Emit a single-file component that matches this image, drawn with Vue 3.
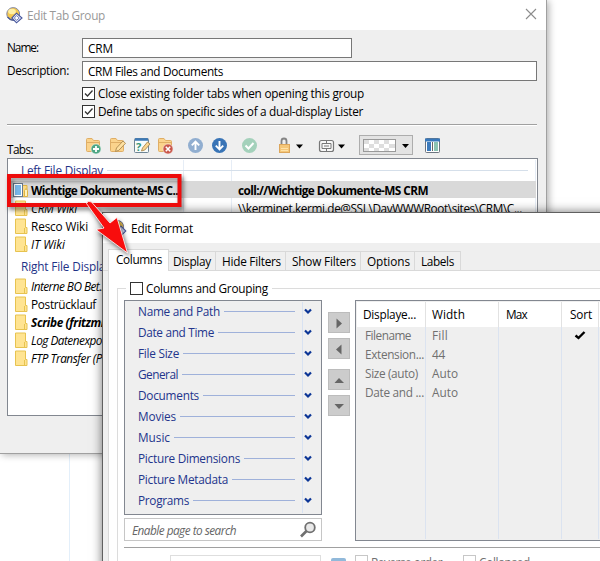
<script setup>
const space = (el, { value }) => {
  if (!value) return
  const n = el.textContent.length
  el.style.letterSpacing = (value - el.getBoundingClientRect().width) / n + 'px'
}
const vSpan = { mounted: space }

const leftTabs = [
  { name: 'CRM Wiki', w: 46, kind: 'italic', path: '\\\\kerminet.kermi.de@SSL\\DavWWWRoot\\sites\\CRM\\C...' },
  { name: 'Resco Wiki', w: 57 },
  { name: 'IT Wiki', w: 34, kind: 'italic' }
]
const rightTabs = [
  { name: 'Interne BO Bet..', w: 73, kind: 'italic' },
  { name: 'Postrücklauf', w: 65 },
  { name: 'Scribe (fritzmi', w: 73, kind: 'bold italic' },
  { name: 'Log Datenexpo', w: 71, kind: 'italic' },
  { name: 'FTP Transfer (P', w: 71, kind: 'italic' }
]
const pages = [
  { name: 'Display', w: 38, box: 47 },
  { name: 'Hide Filters', w: 59, box: 70 },
  { name: 'Show Filters', w: 64, box: 75 },
  { name: 'Options', w: 43, box: 54 },
  { name: 'Labels', w: 33, box: 46 }
]
const groups = [
  ['Name and Path', 82], ['Date and Time', 76], ['File Size', 41], ['General', 40],
  ['Documents', 61], ['Movies', 38], ['Music', 32], ['Picture Dimensions', 102],
  ['Picture Metadata', 90], ['Programs', 51]
]
const columns = [
  ['Filename', 46, 'Fill', 16, true], ['Extension...', 59, '44', 13],
  ['Size (auto)', 53, 'Auto', 26], ['Date and ...', 59, 'Auto', 26]
]
const moves = [
  { side: 'right', d: 'M7.5 5.5 L13 10.5 L7.5 15.5 Z' },
  { side: 'left', d: 'M12.5 5.5 L7 10.5 L12.5 15.5 Z' },
  { side: 'up', d: 'M5.5 13 L10 8 L15 13 Z' },
  { side: 'down', d: 'M5.5 8 L10 13 L15 8 Z' }
]
</script>

<template>
  <div class="desktop">
    <div class="guide"></div>

    <section class="win group-win">
      <header class="title dim">
        <svg class="logo" width="17" height="17" viewBox="0 0 17 17">
          <circle cx="7.2" cy="7" r="6.4" fill="#f5c84e" stroke="#8087a8" />
          <ellipse cx="6" cy="4.5" rx="3.8" ry="2.7" fill="#fff0a5" />
          <path d="M1.5 10 Q5 14 9 13" fill="none" stroke="#4c5c98" stroke-width="1.3" />
          <path d="M10.5 6.2 L16 11 L10.5 15.8 L5.8 11 Z" fill="#e7eafb" stroke="#46569c" stroke-width="1.1" />
          <path d="M10.5 8.5 L13.2 11 L10.5 13.4 L8.4 11 Z" fill="#fff" stroke="#7782b8" />
        </svg>
        <span v-span="78">Edit Tab Group</span>
        <svg class="close" width="12" height="12" viewBox="0 0 12 12"><path d="M1 1 L11 11 M11 1 L1 11" stroke="#8c8c8c" stroke-width="1.1" /></svg>
      </header>

      <div class="field name"><label><span v-span="31">Name:</span></label><div class="input"><span v-span="25">CRM</span></div></div>
      <div class="field desc"><label><span v-span="62">Description:</span></label><div class="input"><span v-span="135">CRM Files and Documents</span></div></div>
      <div class="option first"><svg class="box" width="13" height="13"><path d="M2 5.500 L4.500 8 L9.500 2.500" fill="none" stroke="#333" stroke-width="1.3" /></svg><span v-span="266">Close existing folder tabs when opening this group</span></div>
      <div class="option"><svg class="box" width="13" height="13"><path d="M2 5.500 L4.500 8 L9.500 2.500" fill="none" stroke="#333" stroke-width="1.3" /></svg><span v-span="265">Define tabs on specific sides of a dual-display Lister</span></div>
      <div class="rule"></div>

      <div class="toolbar">
        <div class="caption"><span v-span="26">Tabs:</span></div>
        <svg width="460" height="24" viewBox="80 133 460 24">
          <g fill="#fbd38c" stroke="#dfae66">
            <path d="M86.5 139.5 q0 -1 1 -1 h4.5 l1.5 2 h5 q1 0 1 1 v9 q0 1 -1 1 h-11 q-1 0 -1 -1 Z M87 142.5 h12" />
            <path d="M110.500 139.500 q0 -1 1 -1 h4.500 l1.500 2 h5 q1 0 1 1 v9 q0 1 -1 1 h-11 q-1 0 -1 -1 Z M111 142.500 h12" />
            <path d="M158.500 139.500 q0 -1 1 -1 h4.500 l1.500 2 h5 q1 0 1 1 v9 q0 1 -1 1 h-11 q-1 0 -1 -1 Z M159 142.500 h12" />
          </g>
          <circle cx="96" cy="149" r="5" fill="#4da684" stroke="#e6f2ec" stroke-width=".6" />
          <path d="M96 146 v6 M93 149 h6" stroke="#fff" stroke-width="1.8" />
          <path d="M115.500 151.500 l1 -3.500 l6.500 -7 l2.500 2.300 l-6.700 7 Z" fill="#ffe0a0" stroke="#a98850" stroke-width=".9" />
          <rect x="134.500" y="138.500" width="14" height="14" rx="1" fill="#f8fcfb" stroke="#6e8595" />
          <path d="M135 139.500 h13" stroke="#3d79b6" stroke-width="2.500" />
          <text x="136" y="150.500" class="question">?</text>
          <path d="M141.500 151 l1 -3 l5 -6 l2.500 2 l-5.200 6 Z" fill="#fbd791" stroke="#a98850" stroke-width=".9" />
          <circle cx="168" cy="149" r="5" fill="#c9574b" stroke="#f1e2dd" stroke-width=".6" />
          <path d="M165.800 146.800 l4.400 4.400 M170.200 146.800 l-4.400 4.400" stroke="#fff" stroke-width="1.600" />
          <circle cx="195.500" cy="145.500" r="7.500" fill="#91aed0" />
          <path d="M195.500 150 v-8 M191.800 145.300 l3.700 -3.700 l3.700 3.700" fill="none" stroke="#fff" stroke-width="1.900" />
          <circle cx="219.500" cy="145.500" r="7.500" fill="#3974b6" />
          <path d="M219.500 141 v8 M215.800 145.700 l3.700 3.700 l3.700 -3.700" fill="none" stroke="#fff" stroke-width="1.900" />
          <circle cx="249.500" cy="145.500" r="7.500" fill="#a4d1bb" />
          <path d="M245.500 145.500 l3 3 l5 -5.500" fill="none" stroke="#fff" stroke-width="2" />
          <path d="M281.500 145 v-4 q0 -2.500 2.500 -2.500 t2.500 2.500 v4" fill="none" stroke="#858585" stroke-width="1.800" />
          <rect x="279.500" y="144.500" width="10" height="8" fill="#f5c779" stroke="#dca65c" />
          <path d="M281 148.500 h7 M281 150.500 h7" stroke="#ffe2a8" />
          <path d="M296 144.500 h7 l-3.500 4 Z M338 144.500 h7 l-3.500 4 Z" fill="#000" />
          <rect x="319.500" y="140.500" width="14" height="11" rx="2" fill="#f7f7f7" stroke="#777" stroke-width="1.200" />
          <path d="M322 143.500 h9 v5 h-9 Z M326.500 141 v2 M326.500 149 v2 M324 146 h5" fill="none" stroke="#777" />
          <rect x="359.500" y="135.500" width="53" height="19" fill="#e3e3e3" stroke="#adadad" />
          <rect x="363.500" y="139.500" width="32" height="12" fill="#fff" stroke="#999" />
          <path d="M364 140 h5v4h-5z M374 140 h5v4h-5z M384 140 h5v4h-5z M369 144 h5v4h-5z M379 144 h5v4h-5z M389 144 h6v4h-6z M364 148 h5v3h-5z M374 148 h5v3h-5z M384 148 h5v3h-5z" fill="#dedede" />
          <path d="M402 144 h7 l-3.500 4 Z" fill="#000" />
          <rect x="425.500" y="138.500" width="14" height="14" rx="1" fill="#fff" stroke="#6d7580" />
          <path d="M425 140 h15" stroke="#3778bb" stroke-width="3" />
          <path d="M427 142 h4v9h-4z" fill="#3c7bbd" /><path d="M432 142 h1v9h-1z" fill="#666" /><path d="M434 142 h4v9h-4z" fill="#8ac3b2" />
        </svg>
      </div>

      <div class="tab-list">
        <i class="col-line one"></i><i class="col-line two"></i><i class="col-line three"></i>
        <div class="list-head"><span v-span="82">Left File Display</span><hr></div>
        <div class="row chosen">
          <svg class="folder" width="17" height="17"><path d="M5 3.500 h9 v11 h-9 Z" fill="#fbd983" stroke="#dfb444" /><rect x=".5" y="1.500" width="9" height="13" fill="#fff" stroke="#68798b" /><rect x="2" y="3" width="6" height="10" fill="#78b7e8" /><path d="M11.500 14.500 v-6 l1.500 -2 l1.500 2 v6 Z" fill="#fff3bc" stroke="#dfb444" /></svg>
          <b v-span="147">Wichtige Dokumente-MS C..</b><b v-span="190" class="path">coll://Wichtige Dokumente-MS CRM</b>
        </div>
        <div v-for="t in leftTabs" :key="t.name" class="row">
          <svg class="folder" width="17" height="17"><path d="M2.500 1 h10 v8.500 h1.500 v6 h-11.500 Z" fill="#ffe492" stroke="#e7c350" /><path d="M11.500 15 v-5" stroke="#e7c350" /></svg>
          <span v-span="t.w" :class="t.kind">{{ t.name }}</span><span v-if="t.path" v-span="284" class="path">{{ t.path }}</span>
        </div>
        <div class="list-head second"><span v-span="90">Right File Display</span><hr></div>
        <div v-for="t in rightTabs" :key="t.name" class="row">
          <svg class="folder" width="17" height="17"><path d="M2.500 1 h10 v8.500 h1.500 v6 h-11.500 Z" fill="#ffe492" stroke="#e7c350" /><path d="M11.500 15 v-5" stroke="#e7c350" /></svg>
          <span v-span="t.w" :class="t.kind">{{ t.name }}</span>
        </div>
      </div>
    </section>

    <section class="win format-win">
      <header class="title">
        <svg class="logo" width="17" height="17" viewBox="0 0 17 17">
          <circle cx="7.500" cy="6.500" r="6" fill="#e5bd4e" stroke="#626a8c" />
          <path d="M1.500 10 Q5 14 9 13" fill="none" stroke="#4c5c98" stroke-width="1.300" />
          <path d="M11 6.200 L15.800 11 L11 15.800 L6.300 11 Z" fill="#cfd5ef" stroke="#46569c" stroke-width="1.100" />
        </svg>
        <span v-span="62">Edit Format</span>
      </header>
      <nav>
        <div class="page active"><span v-span="46">Columns</span></div>
        <div v-for="p in pages" :key="p.name" class="page" :style="{ width: p.box + 'px' }"><span v-span="p.w">{{ p.name }}</span></div>
      </nav>
      <main class="panel">
        <div class="legend"><i></i><svg class="box" width="13" height="13"></svg><span v-span="122">Columns and Grouping</span><hr></div>
        <div class="grouping">
          <div class="work">
            <div class="picker">
              <div class="groups">
                <div v-for="g in groups" :key="g[0]" class="group">
                  <span v-span="g[1]">{{ g[0] }}</span><hr>
                  <div class="chev"><svg width="9" height="7"><path d="M1 1.500 L4 4.500 L7 1.500" fill="none" stroke="#0b3596" stroke-width="2.200" /></svg></div>
                </div>
              </div>
              <div class="search"><i v-span="104">Enable page to search</i>
                <svg width="18" height="18"><circle cx="11" cy="6.500" r="4.800" fill="#e9e9e9" stroke="#707070" stroke-width="1.800" /><path d="M7.500 10 L2 15.500" stroke="#707070" stroke-width="2.600" /></svg>
              </div>
            </div>
            <div class="moves"><div v-for="m in moves" :key="m.side" :class="['move', m.side]"><svg width="20" height="20"><path :d="m.d" fill="#666" /></svg></div></div>
            <div class="table">
              <div class="tr th"><div><span v-span="53">Displaye...</span></div><div><span v-span="33">Width</span></div><div><span v-span="21">Max</span></div><div><span v-span="22">Sort</span></div><div></div></div>
              <div v-for="c in columns" :key="c[0]" class="tr"><div><span v-span="c[1]">{{ c[0] }}</span></div><div><span v-span="c[3]">{{ c[2] }}</span></div><div></div><div class="tick"><svg v-if="c[4]" width="12" height="11"><path d="M1.500 5.500 L4.500 8 L10.500 2" fill="none" stroke="#000" stroke-width="2.400" /></svg></div><div></div></div>
              <div class="tr rest"><div></div><div></div><div></div><div></div><div></div></div>
            </div>
          </div>
          <div class="divider"></div>
          <div class="footer"><div class="combo"></div><div class="blue"></div><svg class="box off" width="13" height="13"></svg><span v-span="71" class="reverse">Reverse order</span><svg class="box off" width="13" height="13"></svg><span v-span="51">Collapsed</span></div>
        </div>
      </main>
    </section>

    <svg class="callout" width="200" height="110" viewBox="0 165 200 110">
      <rect x="9" y="176" width="170.500" height="29" fill="none" stroke="#ed0c0c" stroke-width="4" />
      <path d="M86.500 203.500 Q88 200 91.500 202 L110 223 L117 217.500 L127.500 253 L96 229.500 L104 228 Z" fill="#f80d0d" stroke="#fff" stroke-width=".8" />
    </svg>
  </div>
</template>

<style>
body { margin: 0; background: #fff; overflow: hidden; }
</style>
<style scoped>
* { box-sizing: border-box; }
.desktop { position: relative; width: 600px; height: 561px; overflow: hidden; background: #fff; font: 11.8px/18px "Open Sans", "Noto Sans", sans-serif; color: #000; }
span, b, i { white-space: nowrap; }
hr { border: 0; margin: 0; height: 1px; flex: 1; }
.guide { position: absolute; left: 69px; top: 454px; width: 1px; height: 107px; background: #e3effa; }
.win { position: absolute; display: flex; flex-direction: column; background: #efefef; }
.group-win { left: 0; top: 0; width: 547px; height: 454px; border-right: 1px solid #a0a0a0; border-bottom: 1px solid #a0a0a0; box-shadow: 2px 1px 7px rgba(0,0,0,.3); }
.format-win { left: 102px; top: 212px; width: 520px; height: 370px; border: 1px solid #606060; box-shadow: 0 0 10px rgba(0,0,0,.55); }
.title { height: 30px; flex: none; background: #fff; display: flex; align-items: center; padding: 0 9px 0 6px; }
.title .logo { margin-right: 4px; }
.format-win .title { padding-left: 7px; }
.dim { color: #999; }
.close { margin-left: auto; margin-top: -2px; }
.field { display: flex; height: 20px; padding-left: 7px; }
.field label { width: 75px; line-height: 18px; }
.input { height: 20px; border: 1px solid #777; background: #fff; padding-left: 5px; line-height: 18px; }
.name { margin-top: 8px; }
.name .input { width: 270px; }
.desc { margin-top: 3px; }
.desc .input { width: 455px; }
.option { display: flex; align-items: center; height: 18px; padding-left: 82px; gap: 3px; }
.option.first { margin-top: 3px; }
.box { border: 1px solid #333; background: #fff; flex: none; }
.box.off { border-color: #c7c7c7; }
.rule { margin: 4px 9px 0 7px; height: 2px; flex: none; background: #a0a0a0; border-bottom: 1px solid #fff; }
.toolbar { display: flex; height: 24px; margin-top: 7px; padding-left: 7px; }
.caption { width: 73px; padding-top: 7px; flex: none; }
.question { font: bold 11px "Open Sans", sans-serif; fill: #36977b; }
.tab-list { position: relative; margin: 1px 0 0 7px; width: 531px; height: 258px; background: #fff; border: 1px solid #828790; flex: none; }
.col-line { position: absolute; top: 1px; bottom: 1px; width: 1px; background: #e6edf6; }
.one { left: 175px; }
.two { left: 223px; }
.three { right: 1px; }
.list-head { position: relative; display: flex; align-items: center; height: 22px; color: #1e3287; padding: 0 9px 0 13px; gap: 4px; }
.list-head.second { height: 24px; padding-top: 2px; }
.list-head hr { background: #d5dfea; }
.list-head span { background: #fff; }
.row { position: relative; display: flex; height: 18px; align-items: center; padding-left: 5px; }
.folder { width: 17px; margin-right: 1px; flex: none; }
.path { position: absolute; left: 230px; top: 0; }
.chosen { background: linear-gradient(#d9d9d9, #d9d9d9) no-repeat 0 0 / 528px 17px; }
.chosen b { line-height: 18px; }
.italic { font-style: italic; }
.bold { font-weight: 700; }
nav { display: flex; height: 28px; align-items: flex-end; padding-left: 5px; flex: none; border-bottom: 1px solid #d9d9d9; }
.page { height: 19px; border: 1px solid #d9d9d9; border-width: 1px 1px 0 0; padding-left: 6px; line-height: 19px; }
.page:nth-child(2) { padding-left: 4px; }
.page.active { width: 61px; height: 22px; border-width: 1px 1px 0; background: #fff; margin-bottom: -1px; padding-left: 7px; line-height: 19px; }
.panel { flex: 1; margin-left: 5px; background: #fff; border-left: 1px solid #d9d9d9; padding: 8px 0 0 8px; }
.legend { display: flex; height: 18px; align-items: center; }
.legend i { width: 9px; height: 1px; background: #dcdcdc; margin-right: 4px; }
.legend span { margin: 0 4px 0 3px; }
.legend hr { background: #dcdcdc; }
.grouping { border-left: 1px solid #dcdcdc; margin-top: -9px; padding: 12px 0 0 6px; height: 280px; }
.work { display: flex; height: 241px; }
.picker { width: 198px; flex: none; }
.groups { height: 215px; border: 1px solid #828790; background: #efefef; padding: 1px; }
.group { display: flex; height: 21px; align-items: center; padding-left: 12px; color: #23358c; line-height: 19px; }
.group span { margin-top: -3px; }
.group hr { background: #9fb1da; margin: -2px 7px 0 4px; }
.chev { width: 18px; height: 21px; border-left: 1px solid #d8e2f2; padding: 6px 0 0 1px; line-height: 0; }
.groups .group:last-child .chev { height: 22px; }
.search { margin-top: 3px; height: 23px; border: 1px solid #c6c6c6; display: flex; align-items: center; padding: 0 4px 0 7px; color: #666; }
.search svg { margin-left: auto; }
.moves { display: flex; flex-direction: column; gap: 5px; padding: 12px 5px 0 6px; }
.move { width: 22px; height: 21px; border: 1px solid #bcbcbc; background: #ccc; flex: none; line-height: 0; }
.move.up { margin-top: 5px; }
.table { width: 270px; flex: none; height: 241px; border: 1px solid #828790; background: #efefef; padding: 1px; display: flex; flex-direction: column; }
.tr { display: grid; grid-template-columns: 69px 73px 63px 37px 1fr; height: 19px; color: #707070; line-height: 17px; flex: none; }
.tr > div { border-right: 1px solid #dbe3f0; padding-left: 6px; }
.tr > div:first-child { padding-left: 8px; }
.tr.th { height: 25px; line-height: 24px; background: #fff; color: #000; }
.tr.th > div { border-color: #e2e2e2; padding-left: 6px; }
.tr.th > div:first-child { padding-left: 6px; }
.tr.th > div:nth-child(3) { padding-left: 7px; }
.tr.th > div:nth-child(4) { padding-left: 8px; }
.tr .tick { padding: 3px 0 0 12px; line-height: 0; }
.tr.rest { flex: 1; }
.divider { height: 1px; background: #a0a0a0; margin-top: 6px; }
.footer { display: flex; padding-top: 7px; color: #707070; }
.combo { width: 151px; height: 20px; border: 1px solid #dedede; margin-left: 46px; }
.blue { width: 15px; height: 15px; border-radius: 2px; background: #91b9da; margin: 3px 9px 0 10px; }
.footer span { margin: -2px 0 0 3px; }
.footer .reverse { margin-right: 21px; }
.callout { position: absolute; left: 0; top: 165px; filter: drop-shadow(2px 3px 2px rgba(0,0,0,.5)); }
</style>
